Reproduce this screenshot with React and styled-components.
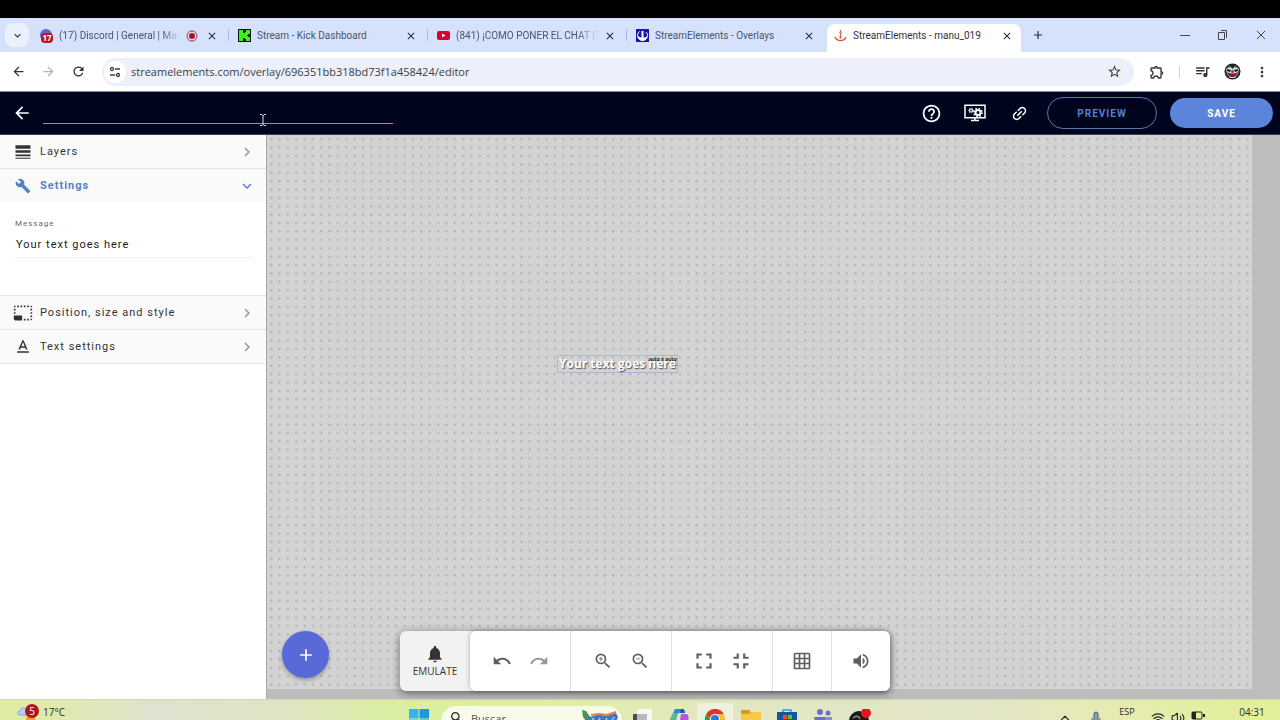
import React, { useState } from 'react';
import styled, { createGlobalStyle } from 'styled-components';
import {
    MdArrowBack, MdArrowForward, MdRefresh, MdClose, MdAdd, MdStarOutline, MdOutlineExtension, MdQueueMusic,
    MdMoreVert, MdKeyboardArrowDown, MdHelpOutline, MdLineWeight, MdBuild, MdPhotoSizeSelectSmall, MdTextFormat,
    MdChevronRight, MdNotifications, MdUndo, MdRedo, MdZoomIn, MdZoomOut, MdFullscreen, MdFullscreenExit,
    MdGridOn, MdVolumeUp, MdSearch, MdLink
} from 'react-icons/md';
import { Wifi, Volume2, ChevronUp } from 'lucide-react';

const GlobalStyle = createGlobalStyle`
 * { box-sizing: border-box; }
 body {
     margin: 0;
     background: #000;
     font-family: "Open Sans", "Noto Sans", sans-serif;
     font-size: 11px;
     color: #2b2b2b;
 }
 button {
     border: 0;
     padding: 0;
     background: none;
     color: inherit;
     font: inherit;
     cursor: pointer;
 }
 svg { display: block; flex: none; }
`;

const Page = styled.div`
 display: flex;
 flex-direction: column;
 height: 100vh;
 padding-top: 18px;
 overflow: hidden;
`;

/* browser */

const TabStrip = styled.div`
 display: flex;
 align-items: flex-end;
 height: 34px;
 flex: none;
 padding-left: 5px;
 background: #d6e2fb;
`;

const TabSearch = styled.button`
 display: grid;
 place-items: center;
 width: 24px;
 height: 24px;
 margin-bottom: 5px;
 border-radius: 8px;
 background: #eaf1fd;
`;

const Tab = styled.div`
 display: flex;
 align-items: center;
 gap: 6px;
 flex: 0 1 ${p => p.$active ? '194px' : '199px'};
 min-width: 0;
 height: 28px;
 padding: 0 ${p => p.$active ? '8px' : '10px'} 5px ${p => p.$active ? '7px' : '10px'};
 margin-left: ${p => p.$active ? '2px' : '0'};
 border-radius: 8px 8px 0 0;
 background: ${p => p.$active ? '#fff' : 'transparent'};
 color: ${p => p.$active ? '#2f3237' : '#4a5568'};
`;

const TabTitle = styled.span`
 flex: 1;
 min-width: 0;
 overflow: hidden;
 white-space: nowrap;
 font-family: Roboto, sans-serif;
 font-size: 10px;
 line-height: 16px;
 ${p => p.$fade && 'mask-image: linear-gradient(to right, #000 85%, transparent);'}
`;

const TabDivider = styled.span`
 width: 1px;
 height: 12px;
 margin-bottom: 11px;
 margin-right: -1px;
 background: #a9bbdf;
`;

const NewTab = styled.button`
 display: grid;
 place-items: center;
 width: 34px;
 height: 34px;
 color: #1f2a3c;
`;

const WindowButtons = styled.div`
 display: flex;
 margin-left: auto;
 button {
     display: grid;
     place-items: center;
     width: 38px;
     height: 34px;
 }
`;

const AddressBar = styled.div`
 display: flex;
 align-items: center;
 height: 40px;
 flex: none;
 padding: 0 3px;
 background: #fff;
 border-bottom: 1px solid #8b8d96;
`;

const BarButton = styled.button`
 display: grid;
 place-items: center;
 width: 30px;
 height: 28px;
 color: ${p => p.disabled ? '#aeb0b4' : '#303236'};
`;

const UrlBox = styled.label`
 display: flex;
 align-items: center;
 flex: 1;
 height: 28px;
 margin: 0 8px 0 9px;
 padding: 0 5px 0 2px;
 border-radius: 14px;
 background: #edf0fa;
`;

const SiteInfo = styled.button`
 display: grid;
 place-items: center;
 width: 22px;
 height: 22px;
 margin-right: 5px;
 border-radius: 50%;
 background: #fff;
`;

const UrlInput = styled.input`
 flex: 1;
 min-width: 0;
 border: 0;
 padding: 0;
 outline: 0;
 background: none;
 color: #3a3c42;
 font: 11px "Open Sans", "Noto Sans", sans-serif;
`;

const BarDivider = styled.span`
 width: 1px;
 height: 12px;
 margin: 0 7px;
 background: #c8d3ea;
`;

/* editor header */

const Header = styled.header`
 display: flex;
 align-items: center;
 height: 43px;
 flex: none;
 padding: 0 7px 0 12px;
 background: #00051e;
 border-bottom: 1px solid #3d4152;
 color: #fff;
`;

const TitleField = styled.div`
 position: relative;
 width: 350px;
 margin-left: 11px;
 input {
     display: block;
     width: 100%;
     height: 22px;
     border: 0;
     border-bottom: 1px solid #6499f0;
     outline: 0;
     background: none;
     color: #fff;
 }
`;

const TextCursor = styled.svg`
 position: absolute;
 left: 216px;
 top: 12px;
`;

const HeaderActions = styled.div`
 display: flex;
 align-items: center;
 margin-left: auto;
`;

const HeaderIcon = styled.button`
 display: grid;
 place-items: center;
 width: 44px;
 height: 32px;
`;

const DiagonalLink = styled(MdLink)`
 transform: rotate(-45deg);
 stroke: #fff;
`;

const PillButton = styled.button`
 width: ${p => p.$primary ? '103px' : '110px'};
 height: ${p => p.$primary ? '30px' : '32px'};
 margin-left: ${p => p.$primary ? '13px' : '6px'};
 border-radius: 16px;
 border: ${p => p.$primary ? '0' : '1px solid #5a76b4'};
 background: ${p => p.$primary ? '#5b84da' : 'transparent'};
 color: ${p => p.$primary ? '#fff' : '#5580cc'};
 font: 700 10px Roboto, sans-serif;
 letter-spacing: 1px;
`;

/* sidebar */

const Workspace = styled.div`
 display: flex;
 flex: 1;
 min-height: 0;
`;

const Sidebar = styled.aside`
 width: 267px;
 flex: none;
 background: #fff;
 border-right: 1px solid #a8a8a8;
 font-family: Roboto, sans-serif;
 letter-spacing: 1px;
`;

const SectionButton = styled.button`
 display: flex;
 align-items: center;
 width: 100%;
 height: ${p => p.$line ? '34px' : '33px'};
 padding: 0 10px 0 13px;
 background: #fafafa;
 border-top: ${p => p.$line ? '1px solid #e6e6e6' : '0'};
 color: ${p => p.$open ? '#5580c8' : '#333'};
 font-size: 11px;
 font-weight: ${p => p.$open ? 700 : 400};
 letter-spacing: 1px;
 text-align: left;
`;

const SectionIcon = styled.span`
 display: grid;
 place-items: center;
 width: 20px;
 margin-right: 7px;
`;

const Chevron = styled(MdChevronRight)`
 margin-left: auto;
 color: ${p => p.$open ? '#5580c8' : '#9a9a9a'};
 transform: ${p => p.$open ? 'rotate(90deg)' : 'none'};
`;

const SettingsBody = styled.div`
 height: 93px;
 padding: 15px 13px 0 15px;
 label {
     display: block;
     color: #6c6c6c;
     font-size: 8px;
     line-height: 14px;
 }
 input {
     display: block;
     width: 100%;
     height: 27px;
     padding: 0 1px;
     border: 0;
     border-bottom: 1px solid #f0efec;
     outline: 0;
     color: #1c1c1c;
     font: 11px Roboto, sans-serif;
     letter-spacing: 1px;
 }
`;

const SidebarEnd = styled.div`
 border-top: 1px solid #e6e6e6;
`;

/* canvas */

const Stage = styled.main`
 position: relative;
 flex: 1;
 min-width: 0;
 padding: 0 28px 10px 0;
 background: #bdbdbd;
`;

const Canvas = styled.div`
 position: relative;
 height: 100%;
 background-color: #d3d3d4;
 background-image: radial-gradient(circle, #b2b2b5 0, #b2b2b5 1px, transparent 1px);
 background-size: calc(100% / 118) calc(100% / 66);
`;

const TextWidget = styled.div`
 position: absolute;
 left: 290px;
 top: 220px;
 padding: 0 1px;
 border: 1px solid #a9b7d3;
 color: #fff;
 font-size: 12px;
 font-weight: 700;
 line-height: 16px;
 white-space: nowrap;
 text-shadow: 1px 1px 1px #555;
`;

const SizeTag = styled.span`
 position: absolute;
 right: 0;
 top: 0;
 color: #222;
 font-size: 5px;
 line-height: 7px;
 text-shadow: none;
`;

const AddButton = styled.button`
 position: absolute;
 left: 15px;
 bottom: 21px;
 display: grid;
 place-items: center;
 width: 47px;
 height: 47px;
 border-radius: 50%;
 background: #5969d8;
 color: #fff;
 box-shadow: 0 2px 4px rgba(0, 0, 0, .3);
`;

const Tools = styled.div`
 position: absolute;
 left: 133px;
 bottom: 8px;
 display: flex;
 height: 60px;
 border-radius: 6px;
 background: #f2f2f2;
 box-shadow: 0 2px 8px rgba(0, 0, 0, .5);
`;

const Emulate = styled.button`
 display: flex;
 flex-direction: column;
 align-items: center;
 justify-content: center;
 width: 70px;
 color: #333;
 font-size: 10px;
 line-height: 14px;
`;

const ToolGroups = styled.div`
 display: flex;
 border-radius: 6px;
 background: #fff;
 box-shadow: 0 0 5px rgba(0, 0, 0, .3);
`;

const ToolGroup = styled.div`
 display: flex;
 align-items: center;
 justify-content: center;
 width: ${p => p.$small ? '59px' : '101px'};
 color: #5f5f5f;
 &:first-child { width: 100px; }
 & + & { border-left: 1px solid #e2e2e2; }
 button {
     display: grid;
     place-items: center;
     width: 37px;
     height: 36px;
 }
`;

/* taskbar */

const Taskbar = styled.footer`
 display: grid;
 grid-template-columns: 1fr auto 1fr;
 height: 21px;
 flex: none;
 padding: 0 4px 0 17px;
 overflow: hidden;
 border-top: 1px solid #d3d8b4;
 background: linear-gradient(to right, #dfeda0 0, #e0e8b4 6%, #dfe1cf 12%, #dfe4c4 22%, #d9ef9f 31%, #dff0a4 42%, #e3e7c0 56%, #e3e5c8 76%, #e6eab8 84%, #e2f096 100%);
`;

const Weather = styled.div`
 display: flex;
 align-items: flex-start;
 gap: 4px;
 padding-top: 3px;
 font-size: 10px;
 line-height: 18px;
`;

const Apps = styled.div`
 display: flex;
 align-items: flex-start;
 padding-right: 7px;
`;

const AppButton = styled.button`
 display: flex;
 justify-content: center;
 width: ${p => p.$start ? '20px' : '36px'};
 height: 32px;
 padding-top: ${p => p.$start ? '9px' : '6px'};
 margin-top: ${p => p.$start ? '0' : '3px'};
 border-radius: 4px 4px 0 0;
 background: ${p => p.$active ? '#eff1df' : 'transparent'};
`;

const SearchPill = styled.label`
 display: flex;
 align-items: flex-start;
 width: 181px;
 height: 30px;
 margin: 6px 3px 0 12px;
 padding: 4px 3px 0 8px;
 border-radius: 15px;
 background: #f8fbe9;
 overflow: hidden;
 input {
     flex: 1;
     min-width: 0;
     height: 16px;
     margin: 0;
     padding: 0 0 0 6px;
     border: 0;
     outline: 0;
     background: none;
     font: 11px "Open Sans", sans-serif;
 }
 input::placeholder { color: #4e5244; opacity: 1; }
`;

const Tray = styled.div`
 display: flex;
 justify-content: flex-end;
 align-items: flex-start;
 padding-top: 4px;
 font-size: 9px;
 line-height: 16px;
 svg { margin-top: 7px; }
`;

const TrayItem = styled.span`
 display: flex;
 justify-content: center;
 width: ${p => p.$wide ? '42px' : '20px'};
`;

const Clock = styled.time`
 width: 48px;
 margin-left: 20px;
 font-size: 10px;
 text-align: center;
`;

const DiscordIcon = () => (
    <svg width="14" height="14" viewBox="0 0 14 14">
        <circle cx="7" cy="6" r="6" fill="#5866d8" />
        <rect x="2" y="4" width="12" height="10" rx="4" fill="#c01025" />
        <text x="8" y="12" textAnchor="middle" fontSize="8" fontWeight="700" fill="#fff">17</text>
    </svg>
);

const RecordIcon = () => (
    <svg width="14" height="12" viewBox="0 0 14 12">
        <circle cx="6" cy="6" r="5" fill="none" stroke="#a8324a" />
        <circle cx="6" cy="6" r="3" fill="#b00f2a" />
    </svg>
);

const KickIcon = () => (
    <svg width="13" height="13" viewBox="0 0 13 13">
        <path fill="#0a130a" d="M0 0h13v13H0z" />
        <path fill="#35f51c" d="M1 1h4v3h2V3h1V1h4v4h-2v1H9v1h1v1h2v4H8v-2H7V9H5v3H1z" />
    </svg>
);

const YoutubeIcon = () => (
    <svg width="13" height="13" viewBox="0 0 13 13">
        <rect y="2" width="13" height="9" rx="2" fill="#d8002f" />
        <path fill="#fff" d="M5 4.500v4l3.500-2z" />
    </svg>
);

const AnchorIcon = () => (
    <svg width="13" height="13" viewBox="0 0 13 13" fill="none">
        <path stroke="#cf5a48" strokeWidth="1.300" d="M6.500 1v8M1 8c1 2.500 3 3.500 5.500 3.500S11 10.500 12 8" />
        <path stroke="#e09a80" d="M5 3.500h3M4.500 7.500l2 2 2-2" />
    </svg>
);

const ElementsIcon = () => (
    <svg width="13" height="13" viewBox="0 0 13 13">
        <path fill="#1b12b4" d="M0 0h13v13H0z" />
        <circle cx="6.500" cy="6.500" r="5" fill="none" stroke="#fff" strokeWidth="1" strokeDasharray="25 7" strokeDashoffset="-27" />
        <path fill="#fff" d="M2 7c2 1.500 3 1.500 3.500 1.500V2h2v6.500C9 8.500 10 8 11 7c0 3-2 4.500-4.500 4.500S2 10 2 7z" />
    </svg>
);

const TuneIcon = () => (
    <svg width="12" height="12" viewBox="0 0 12 12" fill="none" stroke="#3c3e42" strokeWidth="1.300">
        <circle cx="3" cy="3" r="1.500" />
        <circle cx="9" cy="9" r="1.500" />
        <path d="M6 3h5M1 9h5" />
    </svg>
);

const AvatarIcon = () => (
    <svg width="17" height="17" viewBox="0 0 17 17">
        <circle cx="8.500" cy="8.500" r="8" fill="#1c2226" />
        <path fill="#d5dad9" d="M2 6l4-3 2.500 3L11 3l4 3-1 5-3 4H6l-3-4z" />
        <path fill="#3f6f78" d="M4 2l3 2-2 1zM13 2l-3 2 2 1z" />
        <path fill="#1b1b1e" d="M3 6l4 1-1 2-3-1zM14 6l-4 1 1 2 3-1z" />
        <path fill="#7a1f28" d="M3 9c4 2 7 2 11 0-1 4-3 5-5.500 5S4 13 3 9z" />
        <circle cx="8.500" cy="8.500" r="1.500" fill="#c4283c" />
    </svg>
);

const MonitorIcon = () => (
    <svg width="22" height="18" viewBox="0 0 22 18">
        <path fill="none" stroke="#fff" strokeWidth="1.500" d="M1 1.200h20v12.600H1zM7 16.500h8M11 14v2" />
        <circle cx="14" cy="8.500" r="2.500" fill="none" stroke="#fff" strokeWidth="2" />
        <circle cx="14" cy="8.500" r="4" fill="none" stroke="#fff" strokeWidth="1.800" strokeDasharray="1.570 1.570" />
        <circle cx="7" cy="6.500" r="1.500" fill="none" stroke="#fff" strokeWidth="1.200" />
        <circle cx="7" cy="6.500" r="2.400" fill="none" stroke="#fff" strokeWidth="1" strokeDasharray="1 1.150" />
    </svg>
);

const WindowsIcon = () => (
    <svg width="20" height="20" viewBox="0 0 20 20">
        <path fill="#35b4ea" d="M0 0h9.500v9.500H0zM0 10.500h9.500V20H0z" />
        <path fill="#1d98dc" d="M10.500 0H20v9.500h-9.500zM10.500 10.500H20V20h-9.500z" />
    </svg>
);

const MascotIcon = () => (
    <svg width="37" height="22" viewBox="0 0 37 22">
        <path fill="#3c78c0" d="M3 3l6 4 7-3 8 2 10-3 2 4-3 8H10L3 13z" />
        <path fill="#49935a" d="M0 0l4 1 4 6-4 4-3-4z" />
        <path fill="none" stroke="#e0804a" strokeWidth="2" d="M9 5l8-1 8 1 9-3" />
        <path fill="none" stroke="#a9d4f0" strokeWidth="1.500" d="M8 13l4-5M15 14l3-6M22 14l3-6M29 13l3-6" />
        <circle cx="33" cy="10" r="2" fill="#8c5dc6" />
    </svg>
);

const TaskViewIcon = () => (
    <svg width="20" height="20" viewBox="0 0 20 20">
        <path fill="#f7f7f7" d="M4 0h15v13H4z" />
        <path fill="#4c4c4c" d="M0 5h11v12H0z" />
        <path fill="#b9b9b9" d="M4 5h10v11H4z" />
    </svg>
);

const CopilotIcon = () => (
    <svg width="20" height="20" viewBox="0 0 20 20">
        <path fill="#2a8be0" d="M6 0h7l2 4H9L5 17H2c-2 0-2-3-1-6z" />
        <path fill="#5cc07a" d="M1 10l3-6h4L5 17H2c-2 0-2-4-1-7z" />
        <path fill="#1b55ad" d="M12 0h2c1 0 2 2 2 4h-5z" />
        <path fill="#b455d9" d="M12 5h5c3 0 3 4 2 7l-2 6h-7z" />
        <path fill="#ee6a8d" d="M11 12l7 2-2 5H9z" />
    </svg>
);

const ChromeIcon = () => (
    <svg width="20" height="20" viewBox="0 0 20 20">
        <circle cx="10" cy="10" r="10" fill="#f2c02c" />
        <path fill="#2f9d4a" d="M1.300 5A10 10 0 0 0 9 20l5-8-8 0z" />
        <path fill="#d93a2d" d="M1.300 5a10 10 0 0 1 17.400 0H10l-4 6z" />
        <circle cx="10" cy="10" r="5" fill="#fff" />
        <circle cx="10" cy="10" r="4" fill="#3378dc" />
    </svg>
);

const FolderIcon = () => (
    <svg width="20" height="20" viewBox="0 0 20 20">
        <path fill="#d99b1e" d="M0 1h8l2 2h10v6H0z" />
        <path fill="#f7c945" d="M0 5h8l2-2h10v15H0z" />
    </svg>
);

const StoreIcon = () => (
    <svg width="20" height="20" viewBox="0 0 20 20">
        <path fill="none" stroke="#2d9be0" strokeWidth="1.500" d="M6 4V1h8v3" />
        <path fill="#17559c" d="M0 3h20v15H0z" />
        <path fill="#e0553b" d="M6 6h4v4H6z" />
        <path fill="#6dbb3d" d="M11 6h4v4h-4z" />
        <path fill="#2fa5e8" d="M6 11h4v4H6z" />
        <path fill="#f3bd2f" d="M11 11h4v4h-4z" />
    </svg>
);

const TeamsIcon = () => (
    <svg width="20" height="20" viewBox="0 0 20 20" fill="#6a6fce">
        <circle cx="7" cy="3" r="3" />
        <circle cx="15" cy="4" r="2.500" />
        <path d="M1 8h11v9H3z" />
        <path fill="#8a8ee2" d="M12 8h7v8h-7z" />
    </svg>
);

const ObsIcon = () => (
    <svg width="28" height="24" viewBox="0 0 28 24">
        <circle cx="14" cy="12" r="10" fill="#1b1b1d" />
        <path fill="none" stroke="#8a8a8a" strokeWidth="1.500" d="M8 9c3-3 6-2 7 1M18 12c3 0 4 3 3 6" />
        <circle cx="21" cy="4" r="5" fill="#e8141c" />
    </svg>
);

const WeatherIcon = () => (
    <svg width="22" height="20" viewBox="0 0 22 20">
        <path fill="#f1a32b" d="M9 14l8-2 2 6-10 2z" />
        <path fill="#b8d4f2" stroke="#83a8d8" d="M3 12c-3 0-3-4 0-4 0-4 6-4 7 0v4z" />
        <circle cx="15" cy="8" r="7" fill="#b01525" />
        <text x="15" y="12" textAnchor="middle" fontSize="10" fill="#fff">5</text>
    </svg>
);

const MicIcon = () => (
    <svg width="10" height="14" viewBox="0 0 10 14">
        <rect x="3" y="1" width="4" height="9" rx="2" fill="#8fa3b8" stroke="#4c5a66" />
        <path fill="none" stroke="#4c5a66" d="M1 7c0 6 8 6 8 0" />
    </svg>
);

const BatteryIcon = () => (
    <svg width="14" height="10" viewBox="0 0 14 10">
        <rect x="1" y="1" width="10" height="7" rx="1" fill="none" stroke="#222" />
        <path fill="#222" d="M1 1h4v7H1zM12 3h2v3h-2z" />
    </svg>
);

const tabs = [
    { title: '(17) Discord | General | Mak', icon: <DiscordIcon />, recording: true, fade: true },
    { title: 'Stream - Kick Dashboard', icon: <KickIcon /> },
    { title: '(841) ¡COMO PONER EL CHAT D', icon: <YoutubeIcon />, fade: true },
    { title: 'StreamElements - Overlays', icon: <ElementsIcon /> },
    { title: 'StreamElements - manu_019', icon: <AnchorIcon />, active: true }
];

const apps = [
    { name: 'Task view', icon: <TaskViewIcon /> },
    { name: 'Copilot', icon: <CopilotIcon /> },
    { name: 'Chrome', icon: <ChromeIcon />, active: true },
    { name: 'Files', icon: <FolderIcon /> },
    { name: 'Store', icon: <StoreIcon /> },
    { name: 'Teams', icon: <TeamsIcon /> },
    { name: 'OBS', icon: <ObsIcon /> }
];

const Browser = () => (
    <>
        <TabStrip>
            <TabSearch aria-label="Search tabs"><MdKeyboardArrowDown size={13} /></TabSearch>
            {tabs.map((tab, i) => (
                <React.Fragment key={tab.title}>
                    <Tab $active={tab.active}>
                        {tab.icon}
                        <TabTitle $fade={tab.fade}>{tab.title}</TabTitle>
                        {tab.recording && <RecordIcon />}
                        <button aria-label="Close tab"><MdClose size={12} color="#1f2a3c" /></button>
                    </Tab>
                    {i < 3 && <TabDivider />}
                </React.Fragment>
            ))}
            <NewTab aria-label="New tab"><MdAdd size={14} /></NewTab>
            <WindowButtons>
                <button aria-label="Minimize"><svg width="10" height="10" stroke="#444"><path d="M0 5.500h10" /></svg></button>
                <button aria-label="Restore">
                    <svg width="10" height="10" fill="none" stroke="#444"><path d="M.5 2.500h6v7h-6zM3 .5h5.500V8" /></svg>
                </button>
                <button aria-label="Close"><svg width="10" height="10" stroke="#444"><path d="M1 1l8 8M9 1l-8 8" /></svg></button>
            </WindowButtons>
        </TabStrip>
        <AddressBar>
            <BarButton aria-label="Back"><MdArrowBack size={15} /></BarButton>
            <BarButton aria-label="Forward" disabled><MdArrowForward size={15} /></BarButton>
            <BarButton aria-label="Reload"><MdRefresh size={15} /></BarButton>
            <UrlBox>
                <SiteInfo aria-label="Site information"><TuneIcon /></SiteInfo>
                <UrlInput aria-label="Address" defaultValue="streamelements.com/overlay/696351bb318bd73f1a458424/editor" />
                <BarButton aria-label="Bookmark"><MdStarOutline size={15} /></BarButton>
            </UrlBox>
            <BarButton aria-label="Extensions"><MdOutlineExtension size={16} /></BarButton>
            <BarDivider />
            <BarButton aria-label="Media"><MdQueueMusic size={17} /></BarButton>
            <BarButton aria-label="Profile"><AvatarIcon /></BarButton>
            <BarButton aria-label="Menu"><MdMoreVert size={16} /></BarButton>
        </AddressBar>
    </>
);

const EditorHeader = () => (
    <Header>
        <button aria-label="Go back"><MdArrowBack size={20} /></button>
        <TitleField>
            <input aria-label="Overlay name" />
            <TextCursor width="8" height="12" viewBox="0 0 8 12" fill="none" stroke="#ddd">
                <path d="M1 .5h2l1 1 1-1h2M4 1v10M1 11.500h2l1-1 1 1h2" />
            </TextCursor>
        </TitleField>
        <HeaderActions>
            <HeaderIcon aria-label="Help"><MdHelpOutline size={21} /></HeaderIcon>
            <HeaderIcon aria-label="Overlay settings"><MonitorIcon /></HeaderIcon>
            <HeaderIcon aria-label="Copy link"><DiagonalLink size={19} /></HeaderIcon>
            <PillButton>PREVIEW</PillButton>
            <PillButton $primary>SAVE</PillButton>
        </HeaderActions>
    </Header>
);

const Section = ({ icon, title, open, line }) => (
    <SectionButton $open={open} $line={line} aria-expanded={!!open}>
        <SectionIcon>{icon}</SectionIcon>
        {title}
        <Chevron size={18} $open={open} />
    </SectionButton>
);

const Panel = () => {
    const [message, setMessage] = useState('Your text goes here');
    return (
        <Sidebar>
            <Section icon={<MdLineWeight size={20} />} title="Layers" />
            <Section icon={<MdBuild size={16} />} title="Settings" open line />
            <SettingsBody>
                <label htmlFor="message">Message</label>
                <input id="message" value={message} onChange={e => setMessage(e.target.value)} />
            </SettingsBody>
            <Section icon={<MdPhotoSizeSelectSmall size={20} />} title="Position, size and style" line />
            <Section icon={<MdTextFormat size={20} />} title="Text settings" line />
            <SidebarEnd />
        </Sidebar>
    );
};

const EditorStage = () => (
    <Stage>
        <Canvas>
            <TextWidget>Your text goes here<SizeTag>auto x auto</SizeTag></TextWidget>
        </Canvas>
        <AddButton aria-label="Add widget"><MdAdd size={20} /></AddButton>
        <Tools>
            <Emulate><MdNotifications size={20} />EMULATE</Emulate>
            <ToolGroups>
                <ToolGroup>
                    <button aria-label="Undo"><MdUndo size={20} /></button>
                    <button aria-label="Redo"><MdRedo size={20} color="#999" /></button>
                </ToolGroup>
                <ToolGroup>
                    <button aria-label="Zoom in"><MdZoomIn size={20} /></button>
                    <button aria-label="Zoom out"><MdZoomOut size={20} /></button>
                </ToolGroup>
                <ToolGroup>
                    <button aria-label="Fit to screen"><MdFullscreen size={26} /></button>
                    <button aria-label="Actual size"><MdFullscreenExit size={26} /></button>
                </ToolGroup>
                <ToolGroup $small><button aria-label="Grid"><MdGridOn size={20} /></button></ToolGroup>
                <ToolGroup $small><button aria-label="Volume"><MdVolumeUp size={20} /></button></ToolGroup>
            </ToolGroups>
        </Tools>
    </Stage>
);

const SystemBar = () => (
    <Taskbar>
        <Weather><WeatherIcon />17°C</Weather>
        <Apps>
            <AppButton $start aria-label="Start"><WindowsIcon /></AppButton>
            <SearchPill>
                <MdSearch size={16} />
                <input type="text" placeholder="Buscar" aria-label="Buscar" />
                <MascotIcon />
            </SearchPill>
            {apps.map(app => (
                <AppButton key={app.name} $active={app.active} aria-label={app.name}>{app.icon}</AppButton>
            ))}
        </Apps>
        <Tray>
            <TrayItem $wide><ChevronUp size={14} /></TrayItem>
            <TrayItem><MicIcon /></TrayItem>
            <TrayItem $wide>ESP</TrayItem>
            <TrayItem><Wifi size={14} /></TrayItem>
            <TrayItem><Volume2 size={14} /></TrayItem>
            <TrayItem><BatteryIcon /></TrayItem>
            <Clock>04:31</Clock>
        </Tray>
    </Taskbar>
);

const App = () => (
    <Page>
        <GlobalStyle />
        <Browser />
        <EditorHeader />
        <Workspace>
            <Panel />
            <EditorStage />
        </Workspace>
        <SystemBar />
    </Page>
);

export default App;
